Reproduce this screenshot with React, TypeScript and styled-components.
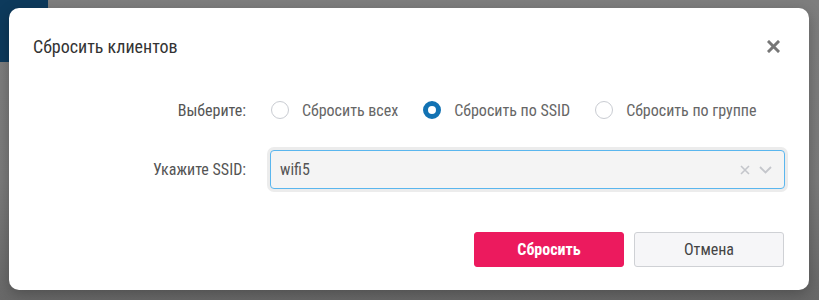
import React from "react";
import styled, { createGlobalStyle } from "styled-components";

const Global = createGlobalStyle`
  html, body { margin: 0; padding: 0; }
  body {
    font-family: "Roboto Condensed", "Liberation Sans Narrow", "DejaVu Sans Condensed", Roboto, sans-serif;
    background: #707070;
  }
`;

const Backdrop = styled.div`
  width: 819px;
  height: 300px;
  box-sizing: border-box;
  padding: 8px 10px 10px 9px;
  background:
    linear-gradient(#0d3a5c, #0d3a5c) 0 0 / 48px 62px no-repeat,
    linear-gradient(180deg, #7e7e7e 0%, #7a7a7a 60%, #686868 100%);
`;

const Modal = styled.div`
  width: 800px;
  height: 282px;
  box-sizing: border-box;
  background: #fff;
  border-radius: 10px;
  box-shadow: 0 4px 14px rgba(0, 0, 0, 0.25);
  padding: 24px 24px 23px;
  display: flex;
  flex-direction: column;
`;

const Header = styled.div`
  display: flex;
  align-items: center;
  justify-content: space-between;
  height: 28px;
`;

const Title = styled.div`
  font-size: 18px;
  color: #333;
`;

const CloseBtn = styled.button`
  border: 0;
  background: none;
  padding: 0;
  margin-right: 5px;
  width: 13px;
  height: 13px;
  display: flex;
  cursor: pointer;
`;

const Form = styled.div`
  margin-top: 31px;
  display: grid;
  grid-template-columns: 213px 1fr;
  column-gap: 24px;
  row-gap: 21px;
  align-items: center;
`;

const Label = styled.div`
  font-size: 16px;
  color: #555;
  text-align: right;
`;

const RadioGroup = styled.div`
  display: flex;
  align-items: center;
  height: 38px;
  gap: 25px;
  padding-left: 1px;
`;

const RadioItem = styled.label`
  display: flex;
  align-items: center;
  gap: 13px;
  font-size: 16px;
  color: #666;
  cursor: pointer;
`;

const Circle = styled.span<{ $checked?: boolean }>`
  width: 18px;
  height: 18px;
  box-sizing: border-box;
  border-radius: 50%;
  border: ${(p) => (p.$checked ? "5px solid #1272b3" : "1px solid #c9ccd2")};
  background: #fff;
`;

const SelectWrap = styled.div`
  height: 39px;
  box-sizing: border-box;
  border: 1px solid #5ab6ee;
  border-radius: 4px;
  background: #f4f4f4;
  box-shadow: 0 0 0 3px #ececec;
  display: flex;
  align-items: center;
  padding: 0 12px 0 9px;
`;

const SelectValue = styled.div`
  flex: 1;
  font-size: 16px;
  color: #555;
`;

const Indicators = styled.div`
  display: flex;
  align-items: center;
  gap: 9px;
`;

const Footer = styled.div`
  margin-top: auto;
  display: flex;
  justify-content: flex-end;
  gap: 10px;
  padding-right: 1px;
`;

const Button = styled.button<{ $primary?: boolean }>`
  width: 150px;
  height: 35px;
  box-sizing: border-box;
  border-radius: 3px;
  font-family: inherit;
  font-size: 16px;
  cursor: pointer;
  border: 1px solid ${(p) => (p.$primary ? "#ec1a5e" : "#cfd1d5")};
  background: ${(p) => (p.$primary ? "#ec1a5e" : "#f6f6f8")};
  color: ${(p) => (p.$primary ? "#fff" : "#444")};
  font-weight: ${(p) => (p.$primary ? 700 : 400)};
`;

export default function App() {
  return (
    <>
      <Global />
      <Backdrop>
        <Modal>
          <Header>
            <Title>Сбросить клиентов</Title>
            <CloseBtn aria-label="Закрыть">
              <svg width="13" height="13" viewBox="0 0 13 13">
                <path d="M2 2L11 11M11 2L2 11" stroke="#777" strokeWidth="3" strokeLinecap="square" />
              </svg>
            </CloseBtn>
          </Header>
          <Form>
            <Label>Выберите:</Label>
            <RadioGroup>
              <RadioItem>
                <Circle />
                Сбросить всех
              </RadioItem>
              <RadioItem>
                <Circle $checked />
                Сбросить по SSID
              </RadioItem>
              <RadioItem>
                <Circle />
                Сбросить по группе
              </RadioItem>
            </RadioGroup>
            <Label>Укажите SSID:</Label>
            <SelectWrap>
              <SelectValue>wifi5</SelectValue>
              <Indicators>
                <svg width="10" height="10" viewBox="0 0 10 10">
                  <path d="M1 1L9 9M9 1L1 9" stroke="#c4c6cb" strokeWidth="1.6" />
                </svg>
                <svg width="13" height="8" viewBox="0 0 13 8">
                  <path d="M1 1L6.5 6.5L12 1" stroke="#c4c6cb" strokeWidth="1.8" fill="none" />
                </svg>
              </Indicators>
            </SelectWrap>
          </Form>
          <Footer>
            <Button $primary>Сбросить</Button>
            <Button>Отмена</Button>
          </Footer>
        </Modal>
      </Backdrop>
    </>
  );
}
